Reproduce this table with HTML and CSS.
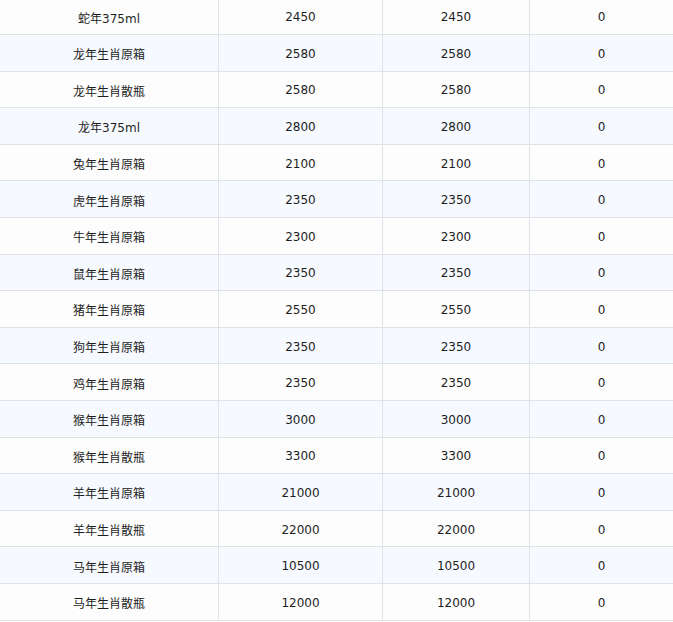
FILE: index.html
```html
<!DOCTYPE html>
<html>
<head>
<meta charset="utf-8">
<link rel="stylesheet" href="styles.css">
</head>
<body>
<div class="table">
  <div class="row"><div class="cell">蛇年375ml</div><div class="cell">2450</div><div class="cell">2450</div><div class="cell">0</div></div>
  <div class="row"><div class="cell">龙年生肖原箱</div><div class="cell">2580</div><div class="cell">2580</div><div class="cell">0</div></div>
  <div class="row"><div class="cell">龙年生肖散瓶</div><div class="cell">2580</div><div class="cell">2580</div><div class="cell">0</div></div>
  <div class="row"><div class="cell">龙年375ml</div><div class="cell">2800</div><div class="cell">2800</div><div class="cell">0</div></div>
  <div class="row"><div class="cell">兔年生肖原箱</div><div class="cell">2100</div><div class="cell">2100</div><div class="cell">0</div></div>
  <div class="row"><div class="cell">虎年生肖原箱</div><div class="cell">2350</div><div class="cell">2350</div><div class="cell">0</div></div>
  <div class="row"><div class="cell">牛年生肖原箱</div><div class="cell">2300</div><div class="cell">2300</div><div class="cell">0</div></div>
  <div class="row"><div class="cell">鼠年生肖原箱</div><div class="cell">2350</div><div class="cell">2350</div><div class="cell">0</div></div>
  <div class="row"><div class="cell">猪年生肖原箱</div><div class="cell">2550</div><div class="cell">2550</div><div class="cell">0</div></div>
  <div class="row"><div class="cell">狗年生肖原箱</div><div class="cell">2350</div><div class="cell">2350</div><div class="cell">0</div></div>
  <div class="row"><div class="cell">鸡年生肖原箱</div><div class="cell">2350</div><div class="cell">2350</div><div class="cell">0</div></div>
  <div class="row"><div class="cell">猴年生肖原箱</div><div class="cell">3000</div><div class="cell">3000</div><div class="cell">0</div></div>
  <div class="row"><div class="cell">猴年生肖散瓶</div><div class="cell">3300</div><div class="cell">3300</div><div class="cell">0</div></div>
  <div class="row"><div class="cell">羊年生肖原箱</div><div class="cell">21000</div><div class="cell">21000</div><div class="cell">0</div></div>
  <div class="row"><div class="cell">羊年生肖散瓶</div><div class="cell">22000</div><div class="cell">22000</div><div class="cell">0</div></div>
  <div class="row"><div class="cell">马年生肖原箱</div><div class="cell">10500</div><div class="cell">10500</div><div class="cell">0</div></div>
  <div class="row"><div class="cell">马年生肖散瓶</div><div class="cell">12000</div><div class="cell">12000</div><div class="cell">0</div></div>
</div>
</body>
</html>
```

FILE: styles.css
```css
html, body {
  margin: 0;
  padding: 0;
  background: #fdfdfd;
  overflow: hidden;
}
.table {
  margin-top: -1.6px;
  width: 673px;
  font-family: "DejaVu Sans", "Noto Sans CJK SC", sans-serif;
  font-size: 12px;
  color: #1e1e1e;
}
.row {
  display: grid;
  grid-template-columns: 219px 164px 147px 1fr;
  height: 36.6px;
  box-sizing: border-box;
  border-bottom: 1px solid #dfe2e7;
  background: #fdfdfd;
}
.row:nth-child(even) {
  background: #f6f9fe;
}
.cell {
  display: flex;
  align-items: center;
  justify-content: center;
  border-right: 1px solid #dfe2e7;
  padding-top: 2px;
}
.cell:last-child {
  border-right: none;
}
```
